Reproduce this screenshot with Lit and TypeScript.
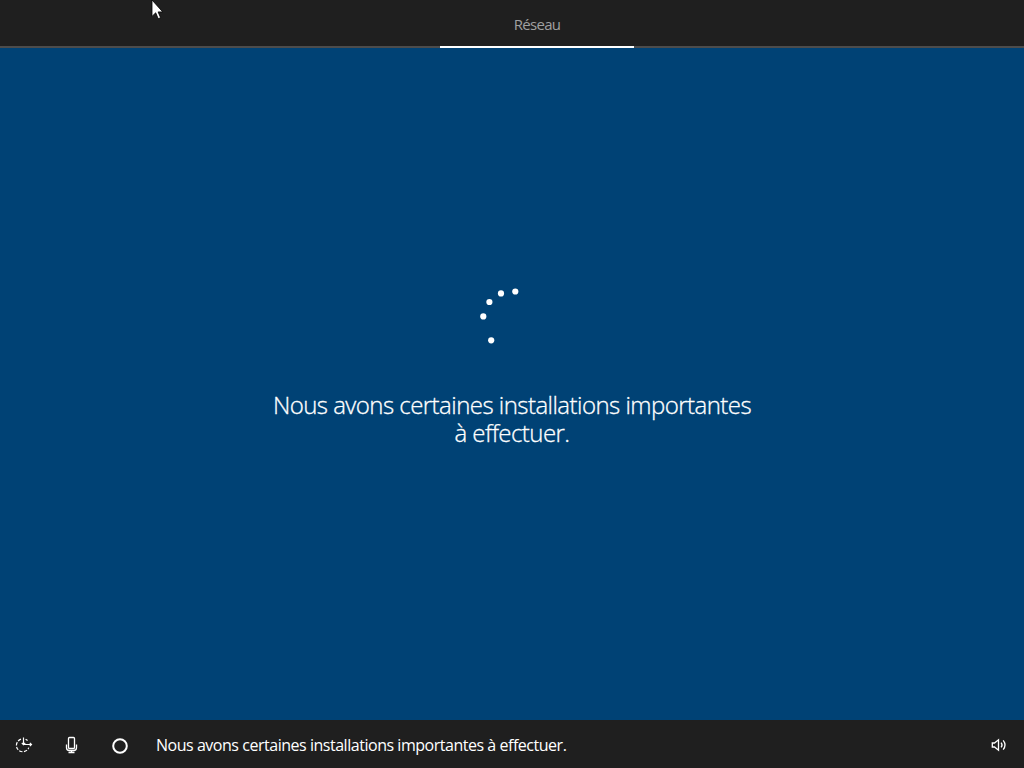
import { LitElement, html, css } from 'lit';
import { customElement, property } from 'lit/decorators.js';

@customElement('progress-ring')
export class ProgressRing extends LitElement {
  static override styles = css`
    :host {
      display: block;
      width: 60px;
      height: 60px;
    }

    svg {
      display: block;
      fill: #fff;
    }
  `;

  override render() {
    return html`
      <svg width="60" height="60" viewBox="482 288 60 60" overflow="visible" role="img" aria-label="Chargement">
        <circle cx="515.3" cy="291.5" r="3.1" />
        <circle cx="501" cy="293.4" r="3.1" />
        <circle cx="489.4" cy="302" r="3.1" />
        <circle cx="483.3" cy="316.4" r="3.1" />
        <circle cx="491.2" cy="340.3" r="3.1" />
      </svg>
    `;
  }
}

@customElement('setup-header')
export class SetupHeader extends LitElement {
  static override styles = css`
    :host {
      display: flex;
      box-sizing: border-box;
      height: 48px;
      background: #1f1f1f;
      box-shadow: inset 0 -2px #4c4c4c;
      padding-left: 440px;
    }

    .tab {
      box-sizing: border-box;
      width: 194px;
      height: 48px;
      border-bottom: 2px solid #fff;
      color: #a0a0a0;
      font-size: 15px;
      line-height: 49px;
      letter-spacing: -0.7px;
      text-align: center;
    }
  `;

  @property({ type: String }) label = '';

  override render() {
    return html`<div class="tab">${this.label}</div>`;
  }
}

@customElement('setup-footer')
export class SetupFooter extends LitElement {
  static override styles = css`
    :host {
      display: flex;
      align-items: center;
      box-sizing: border-box;
      height: 48px;
      background: #1f1f1f;
      color: #fff;
    }

    svg {
      flex: none;
      width: 48px;
      height: 48px;
      fill: none;
      stroke: #fff;
    }

    .caption {
      flex: 1;
      padding: 2px 0 0 12px;
      font-size: 16px;
      line-height: 24px;
      letter-spacing: -0.47px;
      white-space: nowrap;
    }

    .volume {
      margin-right: 1px;
    }
  `;

  @property({ type: String }) caption = '';

  override render() {
    return html`
      <svg viewBox="0 0 48 48" stroke-width="1.2">
        <path d="M21 19.2A6.4 6.4 0 1 0 28.8 27.6" stroke-dasharray="3.4 1.4" />
        <path d="M23.5 17.5v7H31.5M29.8 22.8l1.7 1.7-1.7 1.7M21.8 23l1.7 1.6 1.7-1.6M25.6 19.2l2 1.2" />
      </svg>
      <svg viewBox="0 0 48 48" stroke-width="1.3">
        <rect x="20.5" y="17.5" width="6" height="11" rx="1" />
        <path d="M18.5 24.5v3.2q0 2.8 2.8 2.8h4.4q2.8 0 2.8-2.8v-3.2M23.5 30.5v2M20.5 32.5h6" />
      </svg>
      <svg viewBox="0 0 48 48" stroke-width="2">
        <circle cx="24" cy="26" r="6.8" />
      </svg>
      <div class="caption">${this.caption}</div>
      <svg class="volume" viewBox="0 0 48 48" stroke-width="1.3">
        <path d="M17.3 23h2.2l4-3.2v10.4l-4-3.2h-2.2z" />
        <path d="M26.1 22.6q1.9 2.4 0 4.8M28.2 20.4q3.6 4.6 0 9.2" />
      </svg>
    `;
  }
}

@customElement('app-root')
export class AppRoot extends LitElement {
  static override styles = css`
    :host {
      display: flex;
      flex-direction: column;
      position: relative;
      width: 1024px;
      height: 768px;
      overflow: hidden;
      background: #004275;
      color: #fff;
      font-family: 'Open Sans', 'Noto Sans', sans-serif;
    }

    main {
      flex: 1;
      display: flex;
      flex-direction: column;
      align-items: center;
      padding-top: 240px;
    }

    h1 {
      width: 484px;
      margin: 43px 0 0;
      font-size: 24px;
      font-weight: 300;
      line-height: 28px;
      letter-spacing: -0.54px;
      text-align: center;
      -webkit-text-stroke: 0.3px #fff;
    }

    .pointer {
      position: absolute;
      left: 151px;
      top: 0;
    }
  `;

  @property({ type: String }) message = 'Nous avons certaines installations importantes à effectuer.';

  override render() {
    return html`
      <setup-header label="Réseau"></setup-header>
      <main>
        <progress-ring></progress-ring>
        <h1>${this.message}</h1>
      </main>
      <setup-footer caption=${this.message}></setup-footer>
      <svg class="pointer" width="14" height="21" viewBox="0 0 14 21">
        <path d="M1 0v16.4l3.7-3.6 2.5 5.9 2.4-1-2.5-5.8h4.6z" fill="#fff" stroke="#000" stroke-width="0.8" />
      </svg>
    `;
  }
}
